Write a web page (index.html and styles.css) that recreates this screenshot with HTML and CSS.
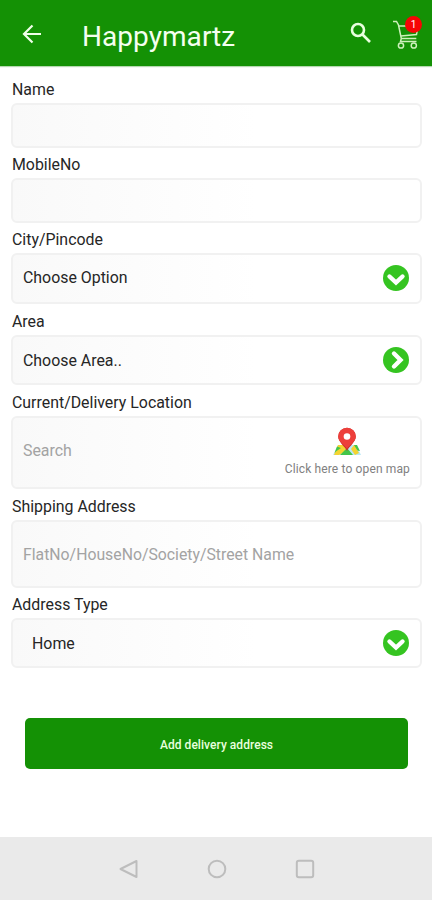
FILE: index.html
```html
<!DOCTYPE html>
<html lang="en">
<head>
<meta charset="utf-8">
<title>Happymartz</title>
<link rel="stylesheet" href="styles.css">
</head>
<body>
<div class="app">
  <header class="bar">
    <svg class="back" viewBox="0 0 20 20"><path d="M19 10H2.500M10.500 1.500L2 10l8.500 8.500"/></svg>
    <h1 class="title">Happymartz</h1>
    <svg class="search" viewBox="0 0 22 22"><circle cx="8" cy="8" r="6"/><path d="M12.500 12.500L20 20"/></svg>
    <div class="cart">
      <svg class="cart-icon" viewBox="0 0 30 30"><path d="M1 1.500h3.500L6.500 5l2.800 13.500h15M7 6h19l-1.500 8.500L9 16M9.300 18.500L8.500 21.500h16"/><circle cx="9" cy="25.500" r="2.600"/><circle cx="21.800" cy="25.500" r="2.600"/></svg>
      <span class="badge">1</span>
    </div>
  </header>

  <main class="form">
    <div class="label name-label">Name</div>
    <div class="field plain"></div>
    <div class="label">MobileNo</div>
    <div class="field plain"></div>
    <div class="label">City/Pincode</div>
    <div class="field select city"><span>Choose Option</span>
      <svg class="round" viewBox="0 0 26 26"><circle cx="13" cy="13" r="13"/><path d="M6.500 11.500l6.500 6 6.500-6"/></svg></div>
    <div class="label tall">Area</div>
    <div class="field select"><span>Choose Area..</span>
      <svg class="round" viewBox="0 0 26 26"><circle cx="13" cy="13" r="13"/><path d="M11 6.500l6.500 6.500-6.500 6.500"/></svg></div>
    <div class="label tall">Current/Delivery Location</div>
    <div class="field location"><span class="hint">Search</span>
      <div class="map">
        <svg class="map-icon" viewBox="0 0 28 30">
          <path fill="#b9e8f5" d="M5 18h18l5 10H0z"/>
          <path fill="#f4d431" d="M5 18h5l5 5-9 5H1z"/>
          <path fill="#43c54a" d="M4 19.500l4 1.500-4.500 3L1.500 26zM14 21l6 7H7zM21 18h3l3 6-6-1z"/>
          <path fill="#f4d431" d="M18 22l3-4 5 8-4 2z"/>
          <path fill="#c92d2b" d="M14 24C12 19.500 5.200 15 5.200 9.500a8.800 8.800 0 0 1 17.600 0C22.800 15 16 19.500 14 24z"/>
          <path fill="#ed3f3b" d="M14 22C12 18 5.200 15 5.200 9.500a8.800 8.800 0 0 1 17.600 0C22.800 15 16 18 14 22z"/>
          <circle cx="14" cy="9.500" r="3.300" fill="#fff"/>
        </svg>
        <span>Click here to open map</span>
      </div>
    </div>
    <div class="label tall">Shipping Address</div>
    <div class="field address"><span class="hint">FlatNo/HouseNo/Society/Street Name</span></div>
    <div class="label">Address Type</div>
    <div class="field select home"><span>Home</span>
      <svg class="round" viewBox="0 0 26 26"><circle cx="13" cy="13" r="13"/><path d="M6.500 11.500l6.500 6 6.500-6"/></svg></div>
    <button class="submit">Add delivery address</button>
  </main>

  <nav class="nav">
    <svg viewBox="0 0 20 20"><path d="M17.500 2v16L1.500 10z"/></svg>
    <svg viewBox="0 0 20 20"><circle cx="10" cy="10" r="8.300"/></svg>
    <svg viewBox="0 0 20 20"><rect x="1.800" y="1.800" width="16.400" height="16.400" rx="2"/></svg>
  </nav>
</div>
</body>
</html>
```
FILE: styles.css
```css
* { box-sizing: border-box; }
body { margin: 0; background: #fff; font-family: Roboto, "Liberation Sans", sans-serif; color: #262626; }
.app { width: 432px; height: 900px; display: flex; flex-direction: column; overflow: hidden; }
.bar { height: 66px; flex: none; background: #149105; display: flex; align-items: center; padding: 3px 10px 0 22px; box-shadow: 0 1px 1px #b5d8b0; color: #f4fff0; }
.back { width: 20px; height: 20px; margin-bottom: 2px; fill: none; stroke: #efffe9; stroke-width: 2.2; }
.title { margin: 4px 0 0 40px; font-size: 28px; line-height: 34px; font-weight: 400; letter-spacing: 0.05px; flex: 1; }
.search { width: 22px; height: 22px; margin-right: 20px; margin-bottom: 3px; fill: none; stroke: #e9ffdf; stroke-width: 2.6; }
.cart { position: relative; width: 30px; height: 30px; }
.cart-icon { width: 30px; height: 30px; display: block; fill: none; stroke: #cdf0bb; stroke-width: 1.5; }
.badge { position: absolute; left: 13px; top: -4px; width: 17px; height: 17px; border-radius: 50%; background: #f60505; color: #fff; font-size: 10px; line-height: 17px; text-align: center; }
.form { flex: 1; padding: 0 10px 0 11px; display: flex; flex-direction: column; }
.label { height: 30px; flex: none; padding: 4px 0 0 1px; display: flex; align-items: center; font-size: 15.9px; line-height: 20px; white-space: nowrap; }
.label.tall { height: 31px; padding-top: 4px; }
.name-label { height: 37px; padding-top: 11px; }
.field { flex: none; border: 2px solid #f1f1f1; border-radius: 6px; background: linear-gradient(90deg, #f9f9f9, #fff 60%); display: flex; align-items: center; justify-content: space-between; padding: 0 10px; font-size: 15.9px; white-space: nowrap; }
.plain { height: 45px; }
.select { height: 50px; padding-right: 11px; }
.city { height: 51px; }
.city span { margin-bottom: 2px; }
.home { padding-left: 19px; }
.location { height: 73px; }
.address { height: 68px; }
.hint { color: #a3a3a3; }
.address .hint { font-size: 15.8px; }
.location .hint { margin-top: -4px; }
.round { width: 26px; height: 26px; }
.city .round { margin-bottom: 1px; }
.home .round { margin-bottom: 1px; }
.round circle { fill: #35c421; }
.round path { fill: none; stroke: #fff; stroke-width: 4.4; stroke-linecap: round; }
.map { display: flex; flex-direction: column; align-items: center; font-size: 12px; letter-spacing: 0.14px; line-height: 16px; color: #808080; }
.map-icon { width: 28px; height: 30px; margin-bottom: 4px; margin-top: -2px; }
.submit { margin: 50px 14px 0; height: 51px; flex: none; border: 0; border-radius: 5px; background: #149105; color: #e9ffdf; font: 500 12px Roboto, sans-serif; letter-spacing: 0.05px; padding: 2px 0 0; }
.nav { height: 63px; flex: none; background: #eaeaea; display: flex; justify-content: center; align-items: center; gap: 68px; padding: 1px 0 0 1px; }
.nav svg { width: 20px; height: 20px; fill: none; stroke: #bdbdbd; stroke-width: 2; stroke-linejoin: round; }
```
